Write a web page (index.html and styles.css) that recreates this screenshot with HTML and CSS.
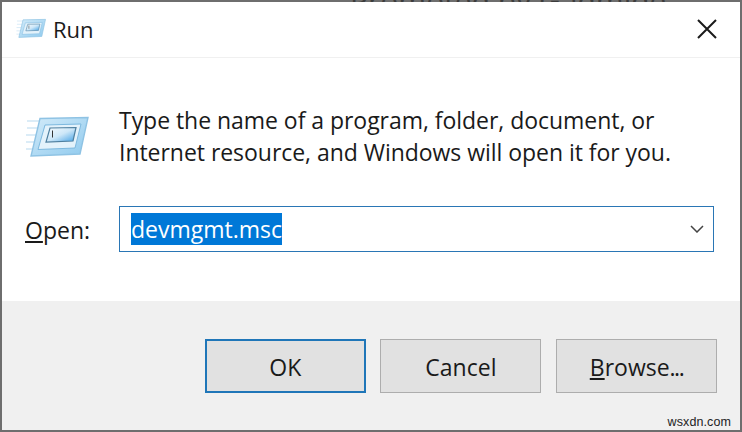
FILE: index.html
```html
<!DOCTYPE html>
<html lang="en">
<head>
  <meta charset="UTF-8">
  <title>Run</title>
  <link rel="stylesheet" href="styles.css">
</head>
<body>
  <div class="backdrop"><span class="backdrop-text">Promoted by Gadmide</span></div>
  <svg class="defs" width="0" height="0">
    <defs>
      <linearGradient id="outer" x1="0" y1="0" x2="1" y2="1">
        <stop offset="0" stop-color="#d3ebf9"/>
        <stop offset="1" stop-color="#8fcaee"/>
      </linearGradient>
      <linearGradient id="inner" x1="0" y1="0" x2="1" y2="1">
        <stop offset="0" stop-color="#f8fcfe"/>
        <stop offset="0.5" stop-color="#cde7f8"/>
        <stop offset="1" stop-color="#3f9fe4"/>
      </linearGradient>
      <symbol id="run-icon" viewBox="0 0 64 42">
        <g stroke="#cfe6f5" stroke-width="1.6">
          <path d="M2 5h14M2 12h12M1 19h11M1 26h9M1 33h7"/>
        </g>
        <path d="M15 2.500 L63 1.500 L55 38 L6 40 Z" fill="url(#outer)" stroke="#8fc3e4" stroke-width="1.400"/>
        <path d="M20 9 L56 8 L50 32 L13 33.500 Z" fill="#e3f2fb" stroke="#7db9df" stroke-width="1"/>
        <path d="M25 12 L51 11.500 L48 25 L21 26 Z" fill="url(#inner)" stroke="#4e7f9f" stroke-width="1.200"/>
        <path d="M27.500 14.500v7" stroke="#333" stroke-width="1"/>
      </symbol>
    </defs>
  </svg>
  <div class="dialog">
    <div class="titlebar">
      <svg class="title-icon"><use href="#run-icon"/></svg>
      <span class="title">Run</span>
      <svg class="close" viewBox="0 0 20 20">
        <path d="M1 1 L19 19 M19 1 L1 19" stroke="#1a1a1a" stroke-width="2" fill="none"/>
      </svg>
    </div>
    <div class="content">
      <div class="intro">
        <svg class="big-icon"><use href="#run-icon"/></svg>
        <p class="message">Type the name of a program, folder, document, or<br>Internet resource, and Windows will open it for you.</p>
      </div>
      <div class="open-row">
        <label class="open-label"><u>O</u>pen:</label>
        <div class="combo">
          <span class="selected">devmgmt.msc</span>
          <svg class="chevron" viewBox="0 0 14 8">
            <path d="M1 1 L7 7 L13 1" stroke="#444" stroke-width="1.500" fill="none"/>
          </svg>
        </div>
      </div>
    </div>
    <div class="footer">
      <button class="btn btn-default">OK</button>
      <button class="btn">Cancel</button>
      <button class="btn"><u>B</u>rowse<span class="dots">...</span></button>
      <span class="watermark">wsxdn.com</span>
    </div>
  </div>
</body>
</html>
```

FILE: styles.css
```css
* {
  margin: 0;
  padding: 0;
  box-sizing: border-box;
}

body {
  width: 742px;
  height: 432px;
  overflow: hidden;
  background-color: #6e6e6e;
  font-family: 'Open Sans', 'Noto Sans', sans-serif;
  color: #1a1a1a;
}

.backdrop {
  height: 2px;
  overflow: hidden;
  line-height: 2px;
  padding-left: 350px;
}

.backdrop-text {
  font-size: 30px;
  color: #3c3c3c;
  white-space: nowrap;
}

.defs {
  position: absolute;
}

.dialog {
  margin: 0 2px;
  height: 428px;
  background-color: white;
  display: flex;
  flex-direction: column;
  position: relative;
}

.titlebar {
  height: 56px;
  border-bottom: 1px solid #f0f0f0;
  display: flex;
  align-items: center;
  padding: 0 23px 2px 14px;
}

.title-icon {
  width: 30px;
  height: 21px;
}

.title {
  font-size: 22px;
  margin-left: 7px;
  flex: 1;
}

.close {
  width: 20px;
  height: 20px;
}

.content {
  flex: 1;
  padding: 0 26px 0 23px;
}

.intro {
  display: flex;
  padding-top: 46px;
}

.big-icon {
  width: 64px;
  height: 42px;
  margin-top: 12px;
  flex-shrink: 0;
}

.message {
  font-size: 23px;
  letter-spacing: -0.04px;
  line-height: 32px;
  margin-left: 30px;
  white-space: nowrap;
}

.open-row {
  display: flex;
  align-items: center;
  margin-top: 38px;
}

.open-label {
  font-size: 23px;
  width: 94px;
  padding-top: 2px;
}

.combo {
  width: 595px;
  height: 46px;
  border: 1.5px solid #2a76b5;
  display: flex;
  align-items: center;
  justify-content: space-between;
  padding: 0 8px 0 11px;
}

.selected {
  font-size: 23px;
  line-height: 32px;
  background-color: #0078d7;
  color: white;
}

.chevron {
  width: 14px;
  height: 8px;
  margin-right: 1px;
}

.footer {
  height: 129px;
  background-color: #f0f0f0;
  display: flex;
  justify-content: flex-end;
  gap: 14.6px;
  padding: 38px 23px 0 0;
}

.btn {
  width: 161px;
  height: 54px;
  padding-top: 2px;
  background-color: #e1e1e1;
  border: 1.5px solid #adadad;
  font-family: inherit;
  font-size: 23px;
  color: #1a1a1a;
}

.btn-default {
  border: 2px solid #1f76b8;
}

.dots {
  letter-spacing: -1.5px;
}

.watermark {
  position: absolute;
  right: 9px;
  bottom: 1px;
  font-family: 'Liberation Sans', sans-serif;
  font-size: 12.5px;
  letter-spacing: 0.1px;
  color: #222;
}
```
